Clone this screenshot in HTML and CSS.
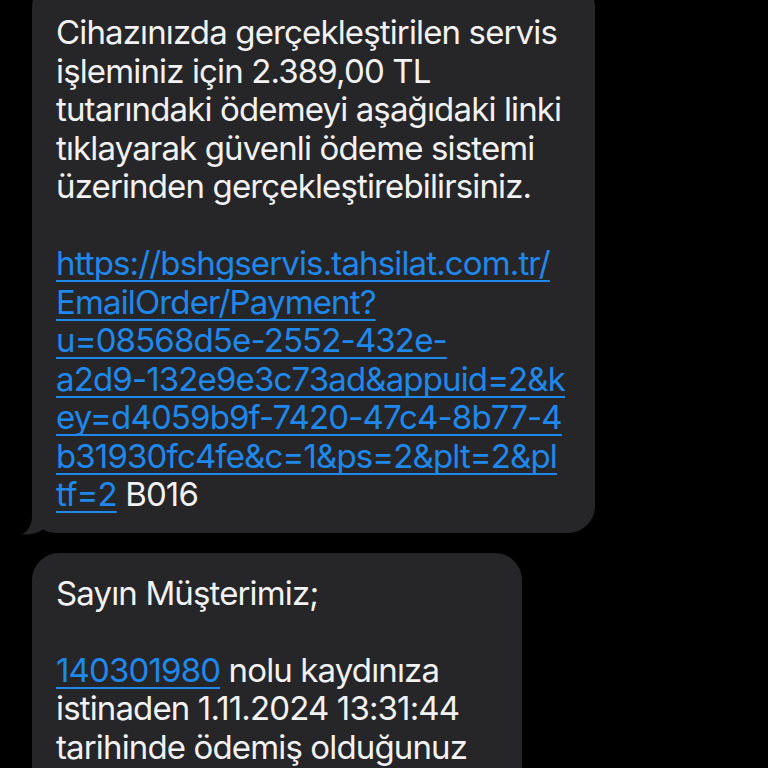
FILE: index.html
```html
<!DOCTYPE html>
<html lang="tr">
<head>
<meta charset="utf-8">
<link rel="stylesheet" href="styles.css">
</head>
<body>
<div class="thread">
  <div class="bubble first">
    <svg class="tail" width="50" height="34" viewBox="0 0 50 34"><path d="M10 0 H50 V32 H36 C30 32 25 31 21 28.5 C16 32 8 34 0 33.5 C6 30 10 24 10 15 Z" fill="#262628"/></svg>
    <p class="msg">Cihazınızda gerçekleştirilen servis<br>işleminiz için 2.389,00 TL<br>tutarındaki ödemeyi aşağıdaki linki<br>tıklayarak güvenli ödeme sistemi<br>üzerinden gerçekleştirebilirsiniz.<br><br><a class="link" href="#">https://bshgservis.tahsilat.com.tr/<br>EmailOrder/Payment?<br>u=08568d5e-2552-432e-<br>a2d9-132e9e3c73ad&amp;appuid=2&amp;k<br>ey=d4059b9f-7420-47c4-8b77-4<br>b31930fc4fe&amp;c=1&amp;ps=2&amp;plt=2&amp;pl<br>tf=2</a> B016</p>
  </div>
  <div class="bubble second">
    <p class="msg">Sayın Müşterimiz;<br><br><a class="link" href="#">140301980</a> nolu kaydınıza<br>istinaden 1.11.2024 13:31:44<br>tarihinde ödemiş olduğunuz</p>
  </div>
</div>
</body>
</html>
```
FILE: styles.css
```css
html, body {
  margin: 0;
  padding: 0;
  background: #000;
  height: 768px;
  overflow: hidden;
}
.thread {
  display: flex;
  flex-direction: column;
  align-items: flex-start;
  gap: 20px;
  padding-left: 32px;
}
.bubble {
  position: relative;
  background: #262628;
  border-radius: 27px;
  box-sizing: border-box;
  padding: 20px 24px 19px 24px;
}
.first {
  width: 563px;
  margin-top: -20px;
  padding-top: 33px;
}
.second {
  width: 490px;
  padding-top: 21px;
  padding-bottom: 40px;
}
.msg {
  position: relative;
  z-index: 1;
  margin: 0;
  font-family: Inter, "Noto Sans", sans-serif;
  font-size: 33px;
  line-height: 38.5px;
  letter-spacing: -0.86px;
  font-variant-ligatures: none;
  font-feature-settings: "liga" 0, "calt" 0;
  color: #f2f2f4;
  white-space: nowrap;
}
.link {
  color: #1f88ec;
  text-decoration: underline;
  text-decoration-thickness: 1.6px;
  text-underline-offset: 5px;
  text-decoration-skip-ink: none;
}
.tail {
  position: absolute;
  z-index: 0;
  left: -10px;
  bottom: -2px;
}
```
